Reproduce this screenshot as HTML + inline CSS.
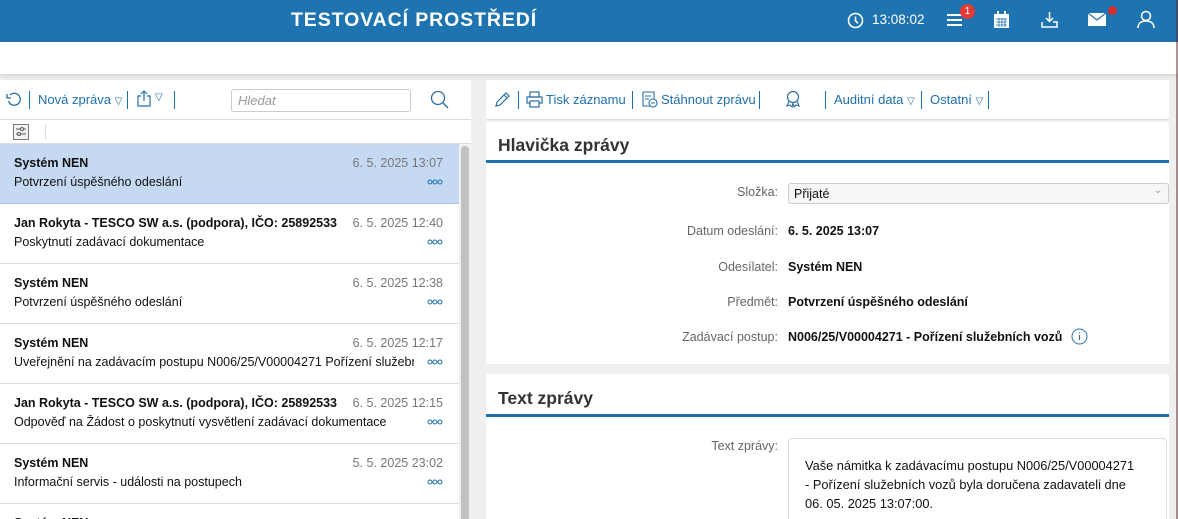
<!DOCTYPE html>
<html><head><meta charset="utf-8"><style>
*{box-sizing:border-box;margin:0;padding:0}
html,body{width:1178px;height:519px;overflow:hidden}
body{background:#efefef;font-family:"Liberation Sans",sans-serif;font-size:13px;color:#111;position:relative}
.hdr{position:absolute;left:0;top:0;width:1178px;height:42px;background:#1e73b1}
.title{position:absolute;left:291px;top:9px;color:#fff;font-weight:bold;font-size:19.5px;letter-spacing:.9px}
.white{position:absolute;left:0;top:42px;width:1178px;height:32px;background:#fff;box-shadow:0 2px 4px rgba(0,0,0,.12)}
.abs{position:absolute}
.lp{position:absolute;left:0;top:80px;width:471px;height:439px;background:#fff;overflow:hidden}
.rp{position:absolute;left:486px;top:80px;width:683px;height:40px;background:#fff;border-bottom:1px solid #ddd}
.blue{color:#1e6fae}
.sep{position:absolute;width:1px;height:18px;background:#1e6fae}
.item{position:absolute;left:0;width:459px;height:60px;border-bottom:1px solid #ddd}
.item .n{position:absolute;left:14px;top:12px;font-weight:bold;font-size:12.5px}
.item .d{position:absolute;right:16px;top:12px;color:#777;font-size:12.5px}
.item .s{position:absolute;left:14px;top:31px;font-size:12.5px;white-space:nowrap;overflow:hidden;width:400px}
.item .o{position:absolute;right:16px;top:36px;width:16px;height:6px}
.item .o:before{content:"";position:absolute;left:0;top:0;width:4px;height:4px;border:1px solid #1e6fae;border-radius:50%;box-shadow:6px 0 0 -0px #fff}
.dots{position:absolute;right:16px;top:35px}
.card{position:absolute;left:486px;width:683px;background:#fff;overflow:hidden}
.card h2{position:absolute;left:12px;font-size:17.5px;font-weight:bold;color:#333}
.bl{position:absolute;left:0;width:683px;height:3px;background:#1e6fae}
.lab{position:absolute;right:391px;color:#666;font-size:12.5px;text-align:right}
.val{position:absolute;left:302px;font-weight:bold;font-size:12.5px}
</style></head><body>
<div class="hdr">
<div class="title">TESTOVACÍ PROSTŘEDÍ</div>
<svg class="abs" style="left:847px;top:12px" width="17" height="17" viewBox="0 0 17 17"><circle cx="8.5" cy="8.5" r="7" fill="none" stroke="#fff" stroke-width="1.6"/><path d="M8.5 4.5v4.3l2.5 2.5" fill="none" stroke="#fff" stroke-width="1.6"/></svg>
<div class="abs" style="left:872px;top:12px;color:#fff;font-size:13.5px">13:08:02</div>
<svg class="abs" style="left:946px;top:12px" width="18" height="16"><path d="M1 3h15M1 8h15M1 13h15" stroke="#fff" stroke-width="2"/></svg>
<div class="abs" style="left:960px;top:4px;width:15px;height:15px;border-radius:50%;background:#e53935;color:#fff;font-size:10px;text-align:center;line-height:15px">1</div>
<svg class="abs" style="left:993px;top:11px" width="17" height="18"><rect x="1" y="3" width="15" height="14" fill="#fff"/><rect x="4" y="0" width="2" height="5" fill="#fff"/><rect x="11" y="0" width="2" height="5" fill="#fff"/><path d="M3 8h11M3 11h11M3 14h11M6 7v9M9 7v9M12 7v9" stroke="#1e73b1" stroke-width=".8"/></svg>
<svg class="abs" style="left:1041px;top:11px" width="17" height="18"><path d="M8.5 1v9M5 7l3.5 3.5L12 7M1 11v5h15v-5h-4" fill="none" stroke="#fff" stroke-width="1.5"/></svg>
<svg class="abs" style="left:1088px;top:13px" width="18" height="13"><rect width="18" height="13" fill="#fff"/><path d="M0 0l9 7 9-7" fill="none" stroke="#1e73b1" stroke-width="1.2"/></svg>
<div class="abs" style="left:1108px;top:6px;width:9px;height:9px;border-radius:50%;background:#d32f2f"></div>
<svg class="abs" style="left:1137px;top:10px" width="18" height="19"><circle cx="9" cy="6" r="4.5" fill="none" stroke="#fff" stroke-width="1.5"/><path d="M1 18c0-5 3.5-7 8-7s8 2 8 7" fill="none" stroke="#fff" stroke-width="1.5"/></svg>
</div>
<div class="white"></div>
<div class="abs" style="left:1176px;top:0;width:2px;height:519px;background:#5a2a2a;opacity:.5"></div>

<div class="lp">
<svg class="abs" style="left:6px;top:12px" width="16" height="16"><path d="M4 3A6 6 0 1 1 2.5 9" fill="none" stroke="#2a6fa8" stroke-width="1.3"/><path d="M1 2v4h4" fill="none" stroke="#2a6fa8" stroke-width="1.3"/></svg>
<div class="sep" style="left:29px;top:11px"></div>
<div class="abs blue" style="left:38px;top:12px">Nová zpráva <span style="font-size:10px">▽</span></div>
<div class="sep" style="left:127px;top:11px"></div>
<svg class="abs" style="left:136px;top:10px" width="16" height="17"><path d="M5 6H2v10h12V6h-3M8 11V1M5 4l3-3 3 3" fill="none" stroke="#2a6fa8" stroke-width="1.2"/></svg>
<div class="abs blue" style="left:155px;top:12px;font-size:10px">▽</div>
<div class="sep" style="left:174px;top:11px"></div>
<div class="abs" style="left:231px;top:9px;width:180px;height:23px;border:1px solid #ccc;border-radius:3px;color:#999;font-style:italic;padding:3px 6px">Hledat</div>
<svg class="abs" style="left:430px;top:10px" width="19" height="19"><circle cx="8" cy="8" r="6.5" fill="none" stroke="#2a6fa8" stroke-width="1.3"/><path d="M13 13l5 5" stroke="#2a6fa8" stroke-width="1.3"/></svg>
<div class="abs" style="left:0;top:39px;width:471px;height:1px;background:#ddd"></div>
<svg class="abs" style="left:13px;top:44px" width="16" height="16"><rect x=".5" y=".5" width="15" height="15" fill="#f4f4f4" stroke="#777"/><path d="M3 5h10M3 10h10" stroke="#555"/><circle cx="9" cy="5" r="1.5" fill="#fff" stroke="#555"/><circle cx="6" cy="10" r="1.5" fill="#fff" stroke="#555"/></svg>
<div class="abs" style="left:45px;top:44px;width:1px;height:15px;background:#ddd"></div>
<div class="abs" style="left:0;top:63px;width:471px;height:1px;background:#ddd"></div>
<div class="abs" style="left:459px;top:64px;width:12px;height:375px;background:#f0f0f0"></div>
<div class="abs" style="left:461px;top:66px;width:8px;height:380px;background:#c1c1c1;border-radius:4px"></div>
<div style="position:absolute;left:0;top:64px">
<div class="item" style="top:0;background:#c5daf2;border-bottom:1px solid #a9c5e8"><div class="n">Systém NEN</div><div class="d">6. 5. 2025 13:07</div><div class="s">Potvrzení úspěšného odeslání</div><svg class="dots" width="16" height="6"><circle cx="3" cy="3" r="2" fill="none" stroke="#1e6fae"/><circle cx="8" cy="3" r="2" fill="none" stroke="#1e6fae"/><circle cx="13" cy="3" r="2" fill="none" stroke="#1e6fae"/></svg></div>
<div class="item" style="top:60px"><div class="n">Jan Rokyta - TESCO SW a.s. (podpora), IČO: 25892533</div><div class="d">6. 5. 2025 12:40</div><div class="s">Poskytnutí zadávací dokumentace</div><svg class="dots" width="16" height="6"><circle cx="3" cy="3" r="2" fill="none" stroke="#1e6fae"/><circle cx="8" cy="3" r="2" fill="none" stroke="#1e6fae"/><circle cx="13" cy="3" r="2" fill="none" stroke="#1e6fae"/></svg></div>
<div class="item" style="top:120px"><div class="n">Systém NEN</div><div class="d">6. 5. 2025 12:38</div><div class="s">Potvrzení úspěšného odeslání</div><svg class="dots" width="16" height="6"><circle cx="3" cy="3" r="2" fill="none" stroke="#1e6fae"/><circle cx="8" cy="3" r="2" fill="none" stroke="#1e6fae"/><circle cx="13" cy="3" r="2" fill="none" stroke="#1e6fae"/></svg></div>
<div class="item" style="top:180px"><div class="n">Systém NEN</div><div class="d">6. 5. 2025 12:17</div><div class="s">Uveřejnění na zadávacím postupu N006/25/V00004271 Pořízení služebních vozů</div><svg class="dots" width="16" height="6"><circle cx="3" cy="3" r="2" fill="none" stroke="#1e6fae"/><circle cx="8" cy="3" r="2" fill="none" stroke="#1e6fae"/><circle cx="13" cy="3" r="2" fill="none" stroke="#1e6fae"/></svg></div>
<div class="item" style="top:240px"><div class="n">Jan Rokyta - TESCO SW a.s. (podpora), IČO: 25892533</div><div class="d">6. 5. 2025 12:15</div><div class="s">Odpověď na Žádost o poskytnutí vysvětlení zadávací dokumentace</div><svg class="dots" width="16" height="6"><circle cx="3" cy="3" r="2" fill="none" stroke="#1e6fae"/><circle cx="8" cy="3" r="2" fill="none" stroke="#1e6fae"/><circle cx="13" cy="3" r="2" fill="none" stroke="#1e6fae"/></svg></div>
<div class="item" style="top:300px"><div class="n">Systém NEN</div><div class="d">5. 5. 2025 23:02</div><div class="s">Informační servis - události na postupech</div><svg class="dots" width="16" height="6"><circle cx="3" cy="3" r="2" fill="none" stroke="#1e6fae"/><circle cx="8" cy="3" r="2" fill="none" stroke="#1e6fae"/><circle cx="13" cy="3" r="2" fill="none" stroke="#1e6fae"/></svg></div>
<div class="item" style="top:360px"><div class="n">Systém NEN</div></div>
</div>
</div>

<div class="rp">
<svg class="abs" style="left:8px;top:11px" width="17" height="17"><path d="M2 15l1-4L12 2l3 3-9 9zM10 4l3 3" fill="none" stroke="#2a6fa8" stroke-width="1.2"/></svg>
<div class="sep" style="left:32px;top:11px"></div>
<svg class="abs" style="left:40px;top:11px" width="17" height="17"><rect x="4" y="1" width="9" height="5" fill="none" stroke="#2a6fa8" stroke-width="1.2"/><rect x="1" y="6" width="15" height="6" fill="none" stroke="#2a6fa8" stroke-width="1.2"/><rect x="4" y="10" width="9" height="6" fill="#fff" stroke="#2a6fa8" stroke-width="1.2"/></svg>
<div class="abs blue" style="left:60px;top:12px">Tisk záznamu</div>
<div class="sep" style="left:146px;top:11px"></div>
<svg class="abs" style="left:154px;top:10px" width="18" height="18"><path d="M3 2h11v7M3 2v14h7" fill="none" stroke="#2a6fa8" stroke-width="1.1"/><circle cx="13" cy="13" r="4" fill="none" stroke="#2a6fa8" stroke-width="1.1"/><path d="M5 6h6M5 9h4M11 13h4" stroke="#2a6fa8"/></svg>
<div class="abs blue" style="left:175px;top:12px">Stáhnout zprávu</div>
<div class="sep" style="left:273px;top:11px"></div>
<svg class="abs" style="left:298px;top:10px" width="18" height="19"><circle cx="9" cy="7" r="5.5" fill="none" stroke="#2a6fa8" stroke-width="1.2"/><path d="M5 11l-2 5 3-1 2 2 1-4M13 11l2 5-3-1-2 2-1-4" fill="none" stroke="#2a6fa8" stroke-width="1.1"/></svg>
<div class="sep" style="left:339px;top:11px"></div>
<div class="abs blue" style="left:348px;top:12px">Auditní data <span style="font-size:10px">▽</span></div>
<div class="sep" style="left:435px;top:11px"></div>
<div class="abs blue" style="left:444px;top:12px">Ostatní <span style="font-size:10px">▽</span></div>
<div class="sep" style="left:502px;top:11px"></div>
</div>

<div class="card" style="top:122px;height:242px">
<h2 style="top:13px">Hlavička zprávy</h2>
<div class="bl" style="top:38px"></div>
<div class="lab" style="top:63px">Složka:</div>
<div class="abs" style="left:302px;top:61px;width:381px;height:21px;border:1px solid #ccc;border-radius:3px;background:#f6f6f6;padding:3px 5px;font-size:12.5px">Přijaté<span style="position:absolute;right:6px;top:1px;color:#999;font-size:10px">⌄</span></div>
<div class="lab" style="top:102px">Datum odeslání:</div><div class="val" style="top:102px">6. 5. 2025 13:07</div>
<div class="lab" style="top:138px">Odesílatel:</div><div class="val" style="top:138px">Systém NEN</div>
<div class="lab" style="top:173px">Předmět:</div><div class="val" style="top:173px">Potvrzení úspěšného odeslání</div>
<div class="lab" style="top:208px">Zadávací postup:</div><div class="val" style="top:208px">N006/25/V00004271 - Pořízení služebních vozů</div>
<svg class="abs" style="left:585px;top:206px" width="17" height="17"><circle cx="8.5" cy="8.5" r="7.5" fill="none" stroke="#2a6fa8"/><path d="M8.5 7v5M8.5 4.5v1" stroke="#2a6fa8" stroke-width="1.2"/></svg>
</div>

<div class="card" style="top:374px;height:145px">
<h2 style="top:14px">Text zprávy</h2>
<div class="bl" style="top:40px"></div>
<div class="lab" style="top:65px">Text zprávy:</div>
<div class="abs" style="left:302px;top:64px;width:379px;height:100px;border:1px solid #ddd;border-radius:4px;padding:17px 16px;font-size:12.8px;line-height:19px;white-space:nowrap">Vaše námitka k zadávacímu postupu N006/25/V00004271<br>- Pořízení služebních vozů byla doručena zadavateli dne<br>06. 05. 2025 13:07:00.</div>
</div>
</body></html>
